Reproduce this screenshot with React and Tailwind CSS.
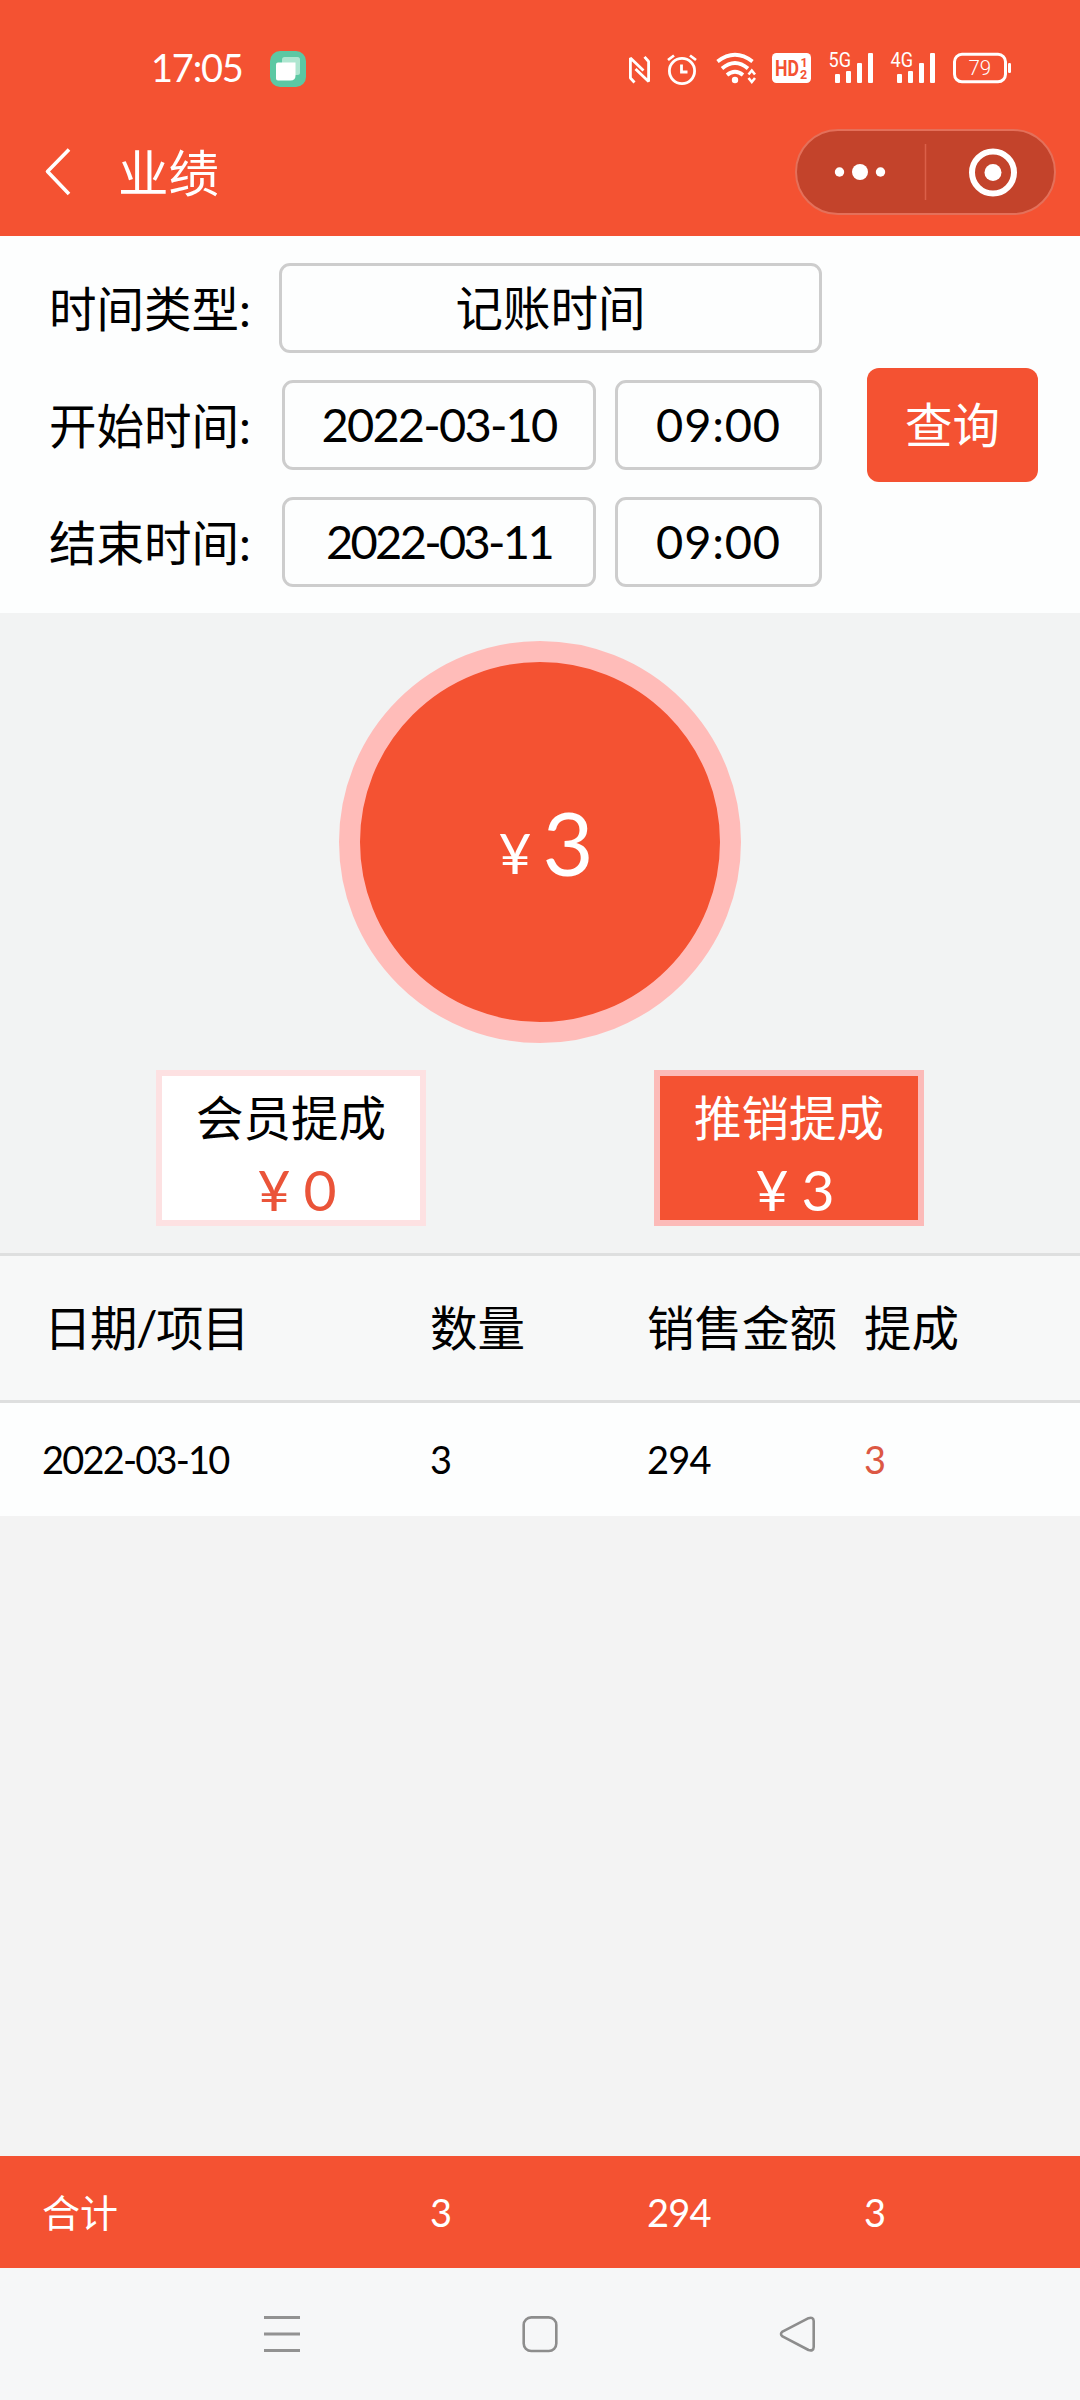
function StatusIcons() {
  return (
    <svg className="block h-10 w-[392px]" viewBox="624 48 392 40" fill="none">
      {/* NFC */}
      <g stroke="#fff" strokeWidth="2.8" strokeLinejoin="bevel">
        <path d="M634.500 82.500L630.400 78V58L643.500 70.500" />
        <path d="M644.500 56.800L648.600 61.500V81.500L635.500 69" />
      </g>
      {/* alarm */}
      <g stroke="#fff" strokeWidth="2.8">
        <circle cx="682" cy="71" r="12.6" />
        <path d="M681.500 64.500V72H687.500M668 60L674 55.500M696 60L690 55.500" />
      </g>
      {/* wifi */}
      <g stroke="#fff" strokeWidth="3.8">
        <path d="M717.500 61.500Q735 48 752.500 61.500" />
        <path d="M722 68.500Q735 57.500 748 68.500" />
        <path d="M727 75Q735 68.500 743 75" />
      </g>
      <circle cx="735" cy="80" r="3.200" fill="#fff" />
      <path d="M748.500 74.500L751.800 70.500L755 74.500M748.500 78L751.800 82L755 78" stroke="#fff" strokeWidth="2.600" />
      {/* HD voice */}
      <rect x="772" y="53" width="39" height="30" rx="4.500" fill="#fff" />
      <g fill="#f45232" fontFamily="Roboto, sans-serif" fontWeight="700">
        <text x="775" y="76" fontSize="22" textLength="24" lengthAdjust="spacingAndGlyphs">HD</text>
        <text x="800.500" y="66.500" fontSize="12.500">1</text>
        <text x="800" y="78.500" fontSize="12.500">2</text>
      </g>
      {/* cellular signal bars */}
      <g fill="#fff">
        <rect x="835" y="74" width="5" height="9" rx="1" />
        <rect x="846" y="71" width="5" height="12" rx="1" />
        <rect x="857" y="63" width="5" height="20" rx="1" />
        <rect x="868" y="53" width="5" height="30" rx="1" />
        <rect x="897" y="74" width="5" height="9" rx="1" />
        <rect x="908" y="71" width="5" height="12" rx="1" />
        <rect x="919" y="63" width="5" height="20" rx="1" />
        <rect x="930" y="53" width="5" height="30" rx="1" />
        <g fontFamily="Roboto, sans-serif" fontSize="19.500">
          <text x="828.500" y="67" textLength="22.500" lengthAdjust="spacingAndGlyphs">5G</text>
          <text x="890.500" y="67" textLength="22.500" lengthAdjust="spacingAndGlyphs">4G</text>
        </g>
      </g>
      {/* battery */}
      <rect x="954.500" y="54.300" width="51" height="27.500" rx="7.500" stroke="#fff" strokeWidth="3" />
      <rect x="1008" y="63" width="3" height="10" rx="1.200" fill="#fff" />
      <text x="968.500" y="75" fontFamily="Roboto, sans-serif" fontSize="20.500" fontWeight="300" fill="#fff">79</text>
    </svg>
  );
}

function StatusBar() {
  return (
    <div className="flex h-[106px] items-start pl-[151px] pr-16">
      <span className="mt-[46px] w-[119px] text-[38px] leading-[42px] tracking-[-1.200px]">17:05</span>
      <svg className="mt-[51px] size-9" viewBox="0 0 36 36">
        <rect width="36" height="36" rx="10" fill="#5cc8a3" />
        <rect x="12" y="6" width="18" height="18" rx="2.500" fill="#aee6d0" />
        <path d="M8 11.500H25.500V24.500Q25.500 29.500 20.500 29.500H8Q6 29.500 6 27.500V13.500Q6 11.500 8 11.500Z" fill="#fff" />
      </svg>
      <div className="ml-auto mt-12">
        <StatusIcons />
      </div>
    </div>
  );
}

function TitleBar() {
  return (
    <div className="flex h-[130px] items-start pl-[43px] pr-6">
      <svg className="mt-[41px] h-[50px] w-7" viewBox="0 0 28 50" fill="none">
        <path d="M26 2.500L4.500 24.500L26 47" stroke="#fff" strokeWidth="3.600" strokeLinejoin="round" />
      </svg>
      <h1 className="ml-[47px] mt-[37px] text-[50.500px] leading-[60px]">业绩</h1>
      <div className="ml-auto mt-[23px] flex h-[86px] w-[261px] items-center rounded-full border-2 border-[#e4705a] bg-[#c3432b]">
        <svg className="h-full w-full" viewBox="797 131 257 82" fill="none">
          <g fill="#fff">
            <circle cx="839.500" cy="172" r="4.700" />
            <circle cx="860" cy="172" r="8" />
            <circle cx="880.500" cy="172" r="4.700" />
            <circle cx="993" cy="172.500" r="8.500" />
          </g>
          <path d="M925.500 144V200" stroke="#db6049" strokeWidth="1.500" />
          <circle cx="993" cy="172.500" r="21" stroke="#fff" strokeWidth="6" />
        </svg>
      </div>
    </div>
  );
}

const box = "flex h-[90px] items-center justify-center rounded-[11px] border-[3px] border-[#cdcdcd]";

function RangeRow({ label, date, time, dateClass }) {
  return (
    <div className="flex items-center">
      <span className="w-[233px] whitespace-nowrap pt-0.5 leading-[60px]">{label}</span>
      <div className={`${box} w-[314px]`}>
        <span className={`pb-0.5 text-[47px] leading-[60px] ${dateClass}`}>{date}</span>
      </div>
      <div className={`${box} ml-[19px] w-[207px]`}>
        <span className="pb-0.5 text-[47px] leading-[60px] tracking-[0.800px]">{time}</span>
      </div>
    </div>
  );
}

function FilterForm() {
  return (
    <section className="flex h-[377px] items-center bg-[#fdfefe] pl-[49px] pr-[42px] text-[47.500px] text-black">
      <div className="flex w-[773px] flex-col gap-[27px]">
        <div className="flex items-center">
          <span className="w-[230px] whitespace-nowrap pt-0.5 leading-[60px]">时间类型:</span>
          <div className={`${box} w-[543px]`}>
            <span className="leading-[60px]">记账时间</span>
          </div>
        </div>
        <RangeRow label="开始时间:" date="2022-03-10" time="09:00" dateClass="tracking-[-1.800px]" />
        <RangeRow label="结束时间:" date="2022-03-11" time="09:00" dateClass="tracking-[-2.700px]" />
      </div>
      <button className="ml-[45px] h-[114px] w-[171px] rounded-[12px] bg-[#f45232] leading-[60px] text-white">
        查询
      </button>
    </section>
  );
}

function Card({ title, amount, className }) {
  return (
    <div className={`flex h-[156px] w-[270px] flex-col items-center border-[6px] ${className}`}>
      <span className="mt-3 text-[47.500px] leading-[60px] text-[var(--title)]">{title}</span>
      <span className="ml-3 mt-[9px] text-[57px] leading-[64px]">
        <span className="mr-[13px]">¥</span>
        {amount}
      </span>
    </div>
  );
}

function Summary() {
  return (
    <section className="flex h-[640px] flex-col items-center bg-[#f2f3f3] pt-7">
      <div className="flex size-[402px] items-baseline justify-center rounded-full border-[21px] border-[#ffbcb9] bg-[#f45232] pt-[131px] leading-[98px] text-white">
        <span className="ml-3 text-[57px]">
          <span className="inline-block -translate-y-0.5">¥</span>
        </span>
        <span className="ml-[11px] text-[88px]">3</span>
      </div>
      <div className="mt-[27px] flex gap-[228px]">
        <Card title="会员提成" amount="0" className="border-[#fde1e2] bg-white text-[#ea5439] [--title:#000]" />
        <Card title="推销提成" amount="3" className="border-[#fcbab8] bg-[#f45232] text-white [--title:#fff]" />
      </div>
    </section>
  );
}

const columns = "grid grid-cols-[388px_217px_217px_1fr] items-center pl-[42px] whitespace-nowrap";

export default function App() {
  return (
    <div className="flex h-[2400px] w-[1080px] flex-col overflow-hidden bg-[#f3f3f3] font-[Lato,'Noto_Sans_CJK_SC',sans-serif]">
      <header className="h-[236px] bg-[#f45232] text-white">
        <StatusBar />
        <TitleBar />
      </header>
      <FilterForm />
      <Summary />
      <div className={`${columns} h-[150px] border-y-[3px] border-[#dedfdf] bg-[#f7f8f8] text-[47.500px] text-black`}>
        <span className="pl-0.5 tracking-[-1.500px]">日期/项目</span>
        <span>数量</span>
        <span>销售金额</span>
        <span>提成</span>
      </div>
      <div className={`${columns} h-[113px] bg-[#fdfefe] text-[38px] text-black`}>
        <span className="tracking-[-1.800px]">2022-03-10</span>
        <span>3</span>
        <span className="tracking-[-0.800px]">294</span>
        <span className="text-[#dc5844]">3</span>
      </div>
      <div className={`${columns} mt-auto h-[112px] bg-[#f45232] text-[38px] text-white`}>
        <span>合计</span>
        <span>3</span>
        <span className="tracking-[-0.800px]">294</span>
        <span>3</span>
      </div>
      <nav className="flex h-[132px] items-center justify-between bg-[#f6f7f8] px-[262px]">
        <svg className="h-10 w-10" viewBox="0 0 40 40" fill="none" stroke="#929292" strokeWidth="3">
          <path d="M2 3.500H38M2 20H38M2 36.500H38" />
        </svg>
        <svg className="h-10 w-10" viewBox="0 0 40 40" fill="none" stroke="#8d8d8d" strokeWidth="2.600">
          <rect x="3.700" y="3.400" width="32.600" height="33.600" rx="7.500" />
        </svg>
        <svg className="h-10 w-10" viewBox="0 0 40 40" fill="none" stroke="#8d8d8d" strokeWidth="2.600" strokeLinejoin="round">
          <path d="M4.500 17.600L30.500 4.200Q35.500 2.500 35.700 7V33Q35.500 37.500 30.500 36L4.500 22.400Q1.500 20 4.500 17.600Z" />
        </svg>
      </nav>
    </div>
  );
}
